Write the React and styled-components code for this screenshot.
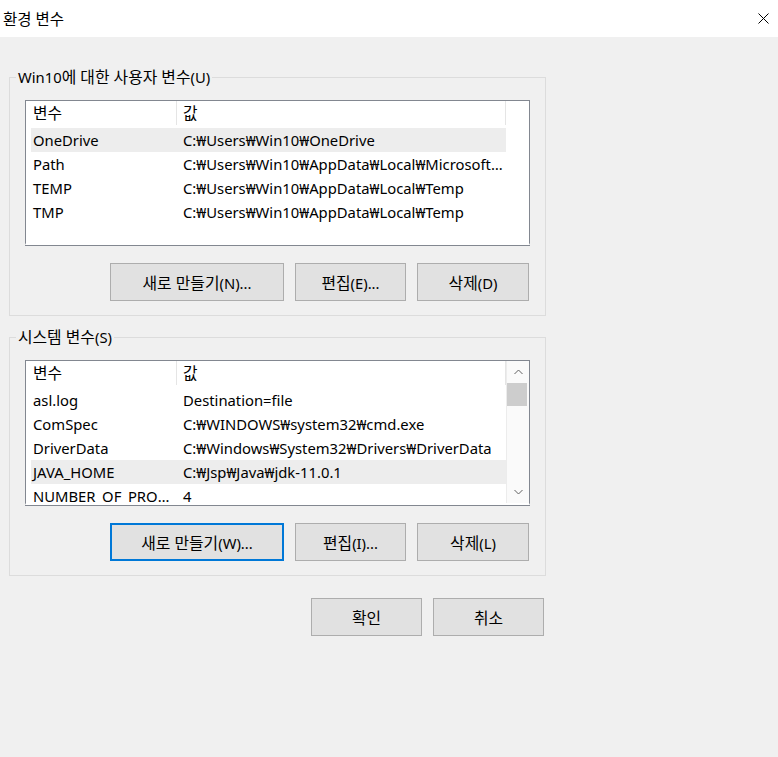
import React from 'react';
import styled, { createGlobalStyle } from 'styled-components';

const GlobalStyle = createGlobalStyle`
  html, body {
    margin: 0;
    padding: 0;
    background: #f0f0f0;
  }
  body {
    font-family: "Noto Sans", "Noto Sans CJK KR", sans-serif;
    font-size: 14.8px;
    color: #000;
  }
`;

const userVars = [
  { name: 'OneDrive', value: 'C:₩Users₩Win10₩OneDrive', selected: true },
  { name: 'Path', value: 'C:₩Users₩Win10₩AppData₩Local₩Microsoft₩WindowsApps;' },
  { name: 'TEMP', value: 'C:₩Users₩Win10₩AppData₩Local₩Temp' },
  { name: 'TMP', value: 'C:₩Users₩Win10₩AppData₩Local₩Temp' },
];

const systemVars = [
  { name: 'asl.log', value: 'Destination=file' },
  { name: 'ComSpec', value: 'C:₩WINDOWS₩system32₩cmd.exe' },
  { name: 'DriverData', value: 'C:₩Windows₩System32₩Drivers₩DriverData' },
  { name: 'JAVA_HOME', value: 'C:₩Jsp₩Java₩jdk-11.0.1', selected: true },
  { name: 'NUMBER_OF_PROCESSORS', value: '4' },
  { name: 'OS', value: 'Windows_NT' },
];

const App = () => {
  return (
    <Window>
      <GlobalStyle />
      <TitleBar>
        <Title>환경 변수</Title>
        <CloseIcon width="11" height="11" viewBox="0 0 11 11">
          <path d="M0.5 0.5 L10.5 10.5 M10.5 0.5 L0.5 10.5" stroke="#000" strokeWidth="1" />
        </CloseIcon>
      </TitleBar>

      <Body>
        <GroupBox>
          <Legend>Win10<Ko>에 대한 사용자 변수</Ko>(U)</Legend>
          <ListView items={userVars} />
          <ButtonRow>
            <Button $w={174}><Ko>새로 만들기</Ko>(N)...</Button>
            <Button $w={111}><Ko>편집</Ko>(E)...</Button>
            <Button $w={112}><Ko>삭제</Ko>(D)</Button>
          </ButtonRow>
        </GroupBox>

        <GroupBox>
          <Legend><Ko>시스템 변수</Ko>(S)</Legend>
          <ListView items={systemVars} scroll />
          <ButtonRow>
            <Button $w={174} $focused><Ko>새로 만들기</Ko>(W)...</Button>
            <Button $w={111}><Ko>편집</Ko>(I)...</Button>
            <Button $w={112}><Ko>삭제</Ko>(L)</Button>
          </ButtonRow>
        </GroupBox>

        <Footer>
          <Button $w={111}><Ko>확인</Ko></Button>
          <Button $w={111}><Ko>취소</Ko></Button>
        </Footer>
      </Body>
    </Window>
  );
};

const ListView = ({ items, scroll }) => (
  <ListBox>
    <DataArea>
      <HeaderRow>
        <HeaderCell><Ko>변수</Ko></HeaderCell>
        <HeaderCell $value><Ko>값</Ko></HeaderCell>
      </HeaderRow>
      {items.map((item) => (
        <Row key={item.name} $selected={item.selected}>
          <Cell>{item.name}</Cell>
          <Cell $value>{item.value}</Cell>
        </Row>
      ))}
    </DataArea>
    {scroll && (
      <ScrollBar>
        <ArrowBox>
          <svg width="9" height="6" viewBox="0 0 9 6">
            <polyline points="0.5,5 4.5,1 8.5,5" fill="none" stroke="#606060" strokeWidth="1" />
          </svg>
        </ArrowBox>
        <Thumb />
        <Track />
        <ArrowBox>
          <svg width="9" height="6" viewBox="0 0 9 6">
            <polyline points="0.5,1 4.5,5 8.5,1" fill="none" stroke="#606060" strokeWidth="1" />
          </svg>
        </ArrowBox>
      </ScrollBar>
    )}
  </ListBox>
);

const Window = styled.div`
  width: 778px;
  min-height: 757px;
  background: #f0f0f0;
`;

const TitleBar = styled.div`
  height: 37px;
  box-sizing: border-box;
  padding: 0 9px 0 3px;
  background: #fff;
  display: flex;
  align-items: center;
  justify-content: space-between;
`;

const Title = styled.span`
  font-size: 15.5px;
  line-height: 20px;
`;

const Ko = styled.span`
  font-size: 1.07em;
`;

const CloseIcon = styled.svg`
  display: block;
`;

const Body = styled.div`
  padding: 30px 0 0 9px;
  display: flex;
  flex-direction: column;
  width: 537px;
`;

const GroupBox = styled.fieldset`
  width: 537px;
  box-sizing: border-box;
  margin: 0;
  padding: 13px 15px 14px;
  border: 1px solid #dcdcdc;
  min-width: 0;

  & + & {
    margin-top: 11px;
  }
`;

const Legend = styled.legend`
  margin-left: -9px;
  padding: 0 2px;
  line-height: 20px;
  height: 20px;
`;

/* bottom edge: white inner band, then the grey line drawn as a shadow */
const ListBox = styled.div`
  height: 145px;
  box-sizing: border-box;
  border: 1px solid #828790;
  border-bottom: 2px solid #fff;
  box-shadow: 0 1px 0 #828790;
  background: #fff;
  display: flex;
  overflow: hidden;
`;

const DataArea = styled.div`
  width: 480px;
  flex-shrink: 0;
  box-sizing: border-box;
  padding-left: 5px;
`;

const HeaderRow = styled.div`
  display: grid;
  grid-template-columns: 146px 329px;
  height: 27px;
`;

const HeaderCell = styled.div`
  box-sizing: border-box;
  padding-left: ${(p) => (p.$value ? '6px' : '2px')};
  border-right: 1px solid #e5e5e5;
  margin-bottom: 3px;
  line-height: 24px;
`;

const Row = styled.div`
  display: grid;
  grid-template-columns: 146px 329px;
  height: 24px;
  line-height: 24px;
  background: ${(p) => (p.$selected ? '#ededed' : 'transparent')};
`;

const Cell = styled.div`
  padding-left: ${(p) => (p.$value ? '6px' : '2px')};
  white-space: nowrap;
  overflow: hidden;
  text-overflow: ellipsis;
`;

const ScrollBar = styled.div`
  flex: 1;
  display: flex;
  flex-direction: column;
  background: #fafafa;
  border-left: 1px solid #ececec;
`;

const ArrowBox = styled.div`
  height: 22px;
  display: flex;
  align-items: center;
  justify-content: center;
`;

const Thumb = styled.div`
  height: 23px;
  margin: 0 2px 0 0;
  background: #cdcdcd;
`;

const Track = styled.div`
  flex: 1;
`;

const ButtonRow = styled.div`
  display: flex;
  justify-content: flex-end;
  gap: 11px;
  margin-top: 18px;
  padding-right: 1px;
`;

const Footer = styled.div`
  display: flex;
  justify-content: flex-end;
  gap: 11px;
  margin-top: 22px;
  width: 535px;
`;

const Button = styled.button`
  width: ${(p) => p.$w}px;
  height: 38px;
  box-sizing: border-box;
  padding: 0;
  background: #e1e1e1;
  border: ${(p) => (p.$focused ? '2px solid #0078d7' : '1px solid #adadad')};
  font-family: inherit;
  font-size: 14.8px;
  color: #000;
`;

export default App;
